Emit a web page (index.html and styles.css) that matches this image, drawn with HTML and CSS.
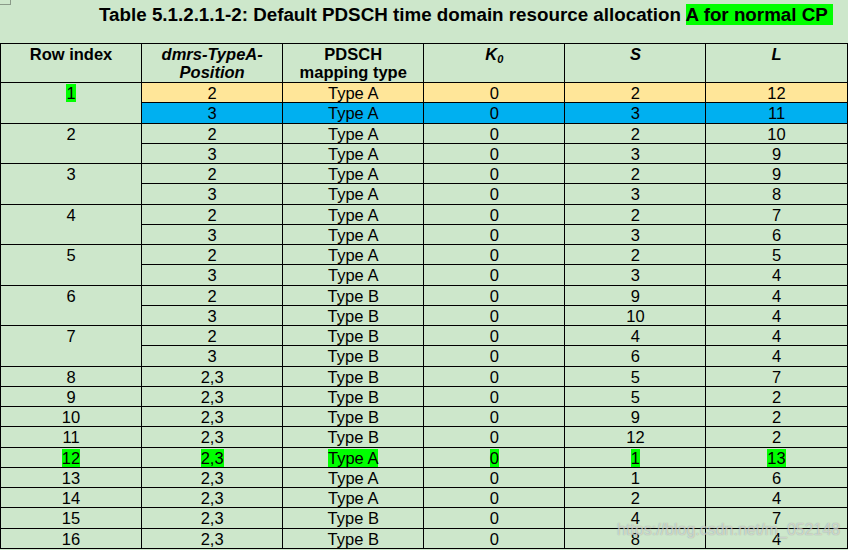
FILE: index.html
```html
<!DOCTYPE html>
<html>
<head>
<meta charset="utf-8">
<title>Table 5.1.2.1.1-2</title>
<link rel="stylesheet" href="styles.css">
</head>
<body>
<div class="corner"></div>
<h1 class="title">Table 5.1.2.1.1-2: Default PDSCH time domain resource allocation <span class="hl">A for normal CP&nbsp;</span></h1>
<table class="alloc">
  <colgroup><col><col><col><col><col><col></colgroup>
  <thead>
    <tr class="head">
      <th>Row index</th>
      <th><i>dmrs-TypeA-<br>Position</i></th>
      <th>PDSCH<br>mapping type</th>
      <th><i>K<sub>0</sub></i></th>
      <th><i>S</i></th>
      <th><i>L</i></th>
    </tr>
  </thead>
  <tbody>
    <tr><td rowspan="2"><span class="hl">1</span></td><td class="gold">2</td><td class="gold">Type A</td><td class="gold">0</td><td class="gold">2</td><td class="gold">12</td></tr>
    <tr><td class="blue">3</td><td class="blue">Type A</td><td class="blue">0</td><td class="blue">3</td><td class="blue">11</td></tr>
    <tr><td rowspan="2">2</td><td>2</td><td>Type A</td><td>0</td><td>2</td><td>10</td></tr>
    <tr><td>3</td><td>Type A</td><td>0</td><td>3</td><td>9</td></tr>
    <tr><td rowspan="2">3</td><td>2</td><td>Type A</td><td>0</td><td>2</td><td>9</td></tr>
    <tr><td>3</td><td>Type A</td><td>0</td><td>3</td><td>8</td></tr>
    <tr><td rowspan="2">4</td><td>2</td><td>Type A</td><td>0</td><td>2</td><td>7</td></tr>
    <tr><td>3</td><td>Type A</td><td>0</td><td>3</td><td>6</td></tr>
    <tr><td rowspan="2">5</td><td>2</td><td>Type A</td><td>0</td><td>2</td><td>5</td></tr>
    <tr><td>3</td><td>Type A</td><td>0</td><td>3</td><td>4</td></tr>
    <tr><td rowspan="2">6</td><td>2</td><td>Type B</td><td>0</td><td>9</td><td>4</td></tr>
    <tr><td>3</td><td>Type B</td><td>0</td><td>10</td><td>4</td></tr>
    <tr><td rowspan="2">7</td><td>2</td><td>Type B</td><td>0</td><td>4</td><td>4</td></tr>
    <tr><td>3</td><td>Type B</td><td>0</td><td>6</td><td>4</td></tr>
    <tr><td>8</td><td>2,3</td><td>Type B</td><td>0</td><td>5</td><td>7</td></tr>
    <tr><td>9</td><td>2,3</td><td>Type B</td><td>0</td><td>5</td><td>2</td></tr>
    <tr><td>10</td><td>2,3</td><td>Type B</td><td>0</td><td>9</td><td>2</td></tr>
    <tr><td>11</td><td>2,3</td><td>Type B</td><td>0</td><td>12</td><td>2</td></tr>
    <tr><td><span class="hl">12</span></td><td><span class="hl">2,3</span></td><td><span class="hl">Type A</span></td><td><span class="hl">0</span></td><td><span class="hl">1</span></td><td><span class="hl">13</span></td></tr>
    <tr><td>13</td><td>2,3</td><td>Type A</td><td>0</td><td>1</td><td>6</td></tr>
    <tr><td>14</td><td>2,3</td><td>Type A</td><td>0</td><td>2</td><td>4</td></tr>
    <tr><td>15</td><td>2,3</td><td>Type B</td><td>0</td><td>4</td><td>7</td></tr>
    <tr><td>16</td><td>2,3</td><td>Type B</td><td>0</td><td>8</td><td>4</td></tr>
  </tbody>
</table>
<div class="watermark">https://blog.csdn.net/m_052148</div>
</body>
</html>
```

FILE: styles.css
```css
html, body {
  margin: 0;
  padding: 0;
  background: #cde7cb;
}
body {
  position: relative;
  width: 848px;
  height: 550px;
  overflow: hidden;
  font-family: "Liberation Sans", Arial, sans-serif;
  color: #000;
}
.corner {
  position: absolute;
  left: 0;
  top: 0;
  width: 10px;
  height: 4px;
  border-right: 1px solid #8a9a88;
  border-bottom: 1px solid #8a9a88;
}
.title {
  margin: 0;
  padding: 4px 0 0 99px;
  height: 43px;
  box-sizing: border-box;
  font-size: 18.8px;
  font-weight: bold;
  line-height: 21px;
  white-space: nowrap;
}
.hl {
  background: #00ff00;
}
.alloc {
  border-collapse: collapse;
  table-layout: fixed;
  width: 847px;
  margin: 0;
  font-size: 16.5px;
}
.alloc col {
  width: 141.1px;
}
.alloc th,
.alloc td {
  border: 1px solid #000;
  text-align: center;
  vertical-align: top;
  padding: 1px 2px 0;
  white-space: nowrap;
  overflow: hidden;
}
.alloc th {
  font-weight: bold;
  line-height: 18px;
  padding-top: 1px;
}
.alloc tr.head {
  height: 39px;
}
.alloc tbody tr {
  height: 20.25px;
}
.alloc td {
  line-height: 18px;
}
.alloc sub {
  font-size: 11px;
  vertical-align: -3px;
  line-height: 0;
}
.alloc td.gold {
  background: #ffe699;
}
.alloc td.blue {
  background: #00b0f0;
}
.watermark {
  position: absolute;
  left: 617px;
  top: 521px;
  font-size: 16px;
  line-height: 18px;
  color: rgba(255, 255, 255, 0.55);
  text-shadow: 0 0 1px rgba(90, 90, 90, 0.6);
  white-space: nowrap;
}
```
